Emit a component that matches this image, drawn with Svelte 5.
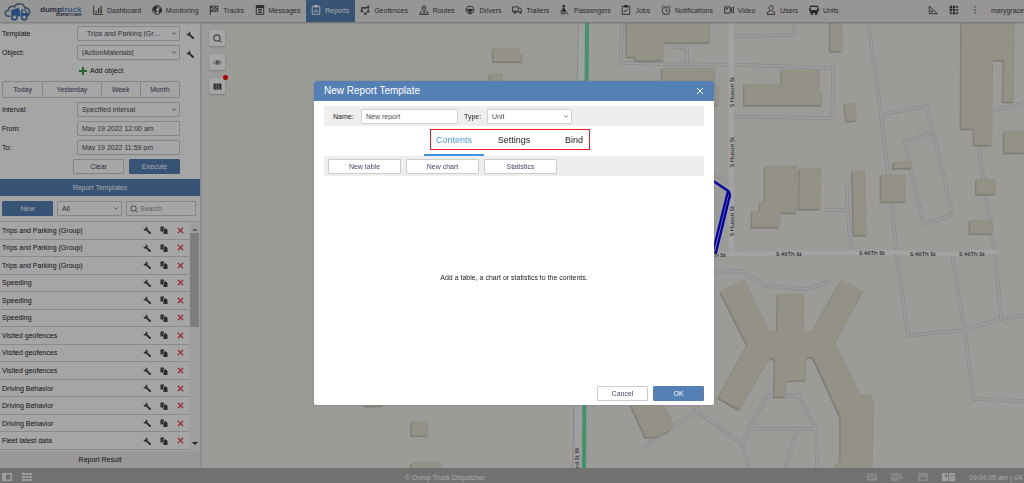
<script>
  const navItems = [
    { label: 'Dashboard', line: 'M1 1V15H16', solid: 'M4 9h2v4H4zM8 5h2v8H8zM12 2h2v11h-2z' },
    { label: 'Monitoring', line: 'M8 1a7 7 0 1 0 .01 0z', solid: 'M2 4l5-3 3 2-2 3-2 1 2 3-2 4-2-4-3-3zM11 3l4 3v5l-3 2-2-4 2-2z' },
    { label: 'Tracks', line: 'M2 1v15M2 2h12v8H2', solid: 'M3 3h3v2H3zM9 3h2v2H9zM6 5h3v2H6zM11 5h3v2h-3zM3 7h3v2H3zM9 7h2v2H9z' },
    { label: 'Messages', line: 'M2 1h12v14H2zM5 7h6M5 9.500h6M5 12h6', solid: 'M2 1h12v4H2z' },
    { label: 'Reports', line: 'M2 2h12v13H2zM5 12V8M8 12V6M11 12V9', solid: 'M5 0h6v4H5z' },
    { label: 'Geofences', line: 'M3 4l5 1 5-2 0 7-5 4-5-5z', solid: 'M2 3h3v3H2zM12 1h3v3h-3zM12 9h3v3h-3zM7 13h3v3H7zM1 8h3v3H1zM7 3h3v3H7z' },
    { label: 'Routes', line: 'M8 10C5 7 4 5 5 3s5-2 6 0-1 4-3 7zM4 9L1 15h14l-3-6M5 13l6-1', solid: 'M7 3h2v3H7z' },
    { label: 'Drivers', line: 'M8 2c4 0 7 3 6 7s-4 5-6 5-5-1-6-5 2-7 6-7zM2 7h12M4 9l3 1v4M12 9l-3 1v4', solid: 'M5 7h6v3H5z' },
    { label: 'Trailers', line: 'M1 3h9v7H1zM11 5h3l1 3v3M1 11h14', solid: 'M3 11h3v3H3zM12 11h3v3h-3z' },
    { label: 'Passengers', line: 'M5 5v6h5l3 4M5 7l5 2M2 8v6h7', solid: 'M4 0h4v4H4zM4 5h4v6H4z' },
    { label: 'Jobs', line: 'M2 2h12v13H2zM5 8l2 3 4-5', solid: 'M5 0h6v4H5z' },
    { label: 'Notifications', line: 'M8 3a6 6 0 1 0 .01 0zM8 5v4l3 1M1 4l3-3M15 4l-3-3M4 14l-2 2M12 14l2 2', solid: '' },
    { label: 'Video', line: 'M1 3h9v10H1zM12 6l3-3v10l-3-3z', solid: 'M3 5h3v2H3z' },
    { label: 'Users', line: 'M8 1c5 0 3 6 1 8l5 3v3H2v-3l5-3C4 6 4 1 8 1z', solid: '' },
    { label: 'Units', line: 'M2 2h12v10H2z', solid: 'M0 5h2v4H0zM14 5h2v4h-2zM2 8h12v5H2zM3 12h3v4H3zM10 12h3v4h-3zM2 1h12v2H2z' }
  ];

  const templates = [
    'Trips and Parking (Group)',
    'Trips and Parking (Group)',
    'Trips and Parking (Group)',
    'Speeding',
    'Speeding',
    'Speeding',
    'Visited geofences',
    'Visited geofences',
    'Visited geofences',
    'Driving Behavior',
    'Driving Behavior',
    'Driving Behavior',
    'Fleet latest data'
  ];

  const tabs = ['Contents', 'Settings', 'Bind'];
  let activeTab = $state('Contents');
  let reportName = $state('New report');
  let from = $state('May 19 2022 12:00 am');
  let to = $state('May 19 2022 11:59 pm');

  // map geometry, three units per pixel
  const roads = [
    'M103 48L281 45V5',
    'M-233 5L-238 128L-130 132L103 134L399 144L397 294L103 290',
    'M-39 130V85L-88 78',
    'M504 5L543 285L575 545L592 720L624 947L790 930L904 897L972 885',
    'M543 283L680 258L758 584L670 614L614 365L692 340',
    'M836 378L860 550L885 700L904 897',
    'M878 272L972 250',
    'M441 502L443 570L453 690M372 569H441',
    'M40 460L90 490',
    'M757 708L793 930L822 1137L972 1143',
    'M42 757L125 753L198 798L320 808L388 786',
    'M-170 1285L-10 1172V1150M-10 1172L125 1272L146 1344',
    'M125 1272L200 1127H297L346 1227L352 1344M150 1227H346M290 1230L256 1344'
  ];

  const buildings = [
    '-220,5 30,5 30,67 -110,67 -110,121 -195,121 -195,110 -220,110',
    '-113,145 44,145 44,195 56,195 56,255 -113,255',
    '391,5 425,5 425,93 391,93',
    '245,151 358,151 358,222 366,222 366,255 133,255 133,193 245,193',
    '434,252 465,248 469,300 440,304',
    '785,5 943,5 940,245 909,245 912,120 878,120 875,375 822,375 822,326 783,326',
    '912,334 972,334 972,398 912,398',
    '195,438 291,438 289,578 242,578 238,621 156,621 156,574 180,574 180,548 195,548',
    '299,445 362,445 360,567 297,567',
    '457,454 494,454 499,645 462,645',
    '580,426 634,426 634,444 580,444',
    '543,466 616,466 616,544 543,544',
    '829,479 886,479 886,522 829,522',
    '810,601 877,601 877,640 810,640',
    '62,815 132,778 208,935 232,935 234,823 312,823 310,935 336,935 424,780 488,815 405,968 480,1123 512,1125 521,1146 516,1350 407,1350 412,1330 422,1324 422,1190 340,1012 317,1012 317,1080 258,1082 256,1130 223,1130 225,1020 210,1012 119,1168 54,1132 142,975',
    '-207,1155 -110,1155 -80,1210 -90,1230 -130,1250 -162,1252',
    '-865,1205 -817,1205 -817,1246 -865,1246',
    '-865,1328 -778,1328 -778,1350 -865,1350',
    '-1005,1140 -950,1140 -950,1157 -1005,1157',
    '-620,85 -544,85 -544,102 -533,102 -533,124 -620,124',
    '-630,163 -595,163 -595,195 -630,195'
  ];
</script>

{#snippet chevron()}
  <svg class="chevron" viewBox="0 0 8 6" aria-hidden="true"><path d="M1.500 1.500L4 4L6.500 1.500" /></svg>
{/snippet}

{#snippet wrench()}
  <svg class="glyph" viewBox="0 0 16 16" aria-hidden="true">
    <path d="M5 1l1 3-2 2-3-1c0 3 2 5 5 4l7 7c2 0 3-1 3-3L9 7c1-3-1-6-4-6z" />
  </svg>
{/snippet}

{#snippet magnifier()}
  <svg class="magnifier" viewBox="0 0 16 16" aria-hidden="true">
    <circle cx="7" cy="7" r="5.500" /><path d="M11 11l4 4" />
  </svg>
{/snippet}

<div class="app">
  <header>
    <a class="logo" href="#home" aria-label="Dump Truck Dispatcher">
      <svg viewBox="0 0 52 36" aria-hidden="true">
        <path class="cloud" d="M12 27H9C1 27 0 17 8 16C8 9 15 6 20 9C24 1 38 1 40 11C50 10 53 24 43 27" />
        <path class="truck" d="M13 16l15-5 3 7v9H15zM33 14h8l5 7v7H32z" />
        <path class="cab" d="M36 16h4l3 5h-7z" />
        <circle cx="20" cy="29" r="5" /><circle cx="39" cy="29" r="5" />
      </svg>
      <span class="brand">
        <span class="name">dump<b>truck</b></span>
        <span class="sub">DISPATCHER</span>
      </span>
    </a>
    <nav>
      {#each navItems as item}
        <a href="#{item.label}" class:active={item.label === 'Reports'}>
          <svg viewBox="0 0 16 16" aria-hidden="true">
            <path class="line" d={item.line} />
            <path class="solid" d={item.solid} />
          </svg>
          {item.label}
        </a>
      {/each}
    </nav>
    <div class="tools">
      <button aria-label="Ruler">
        <svg viewBox="0 0 16 16"><path class="line" d="M2 2v12h13zM5 9v2h3z" /></svg>
      </button>
      <button aria-label="Apps">
        <svg viewBox="0 0 16 16">
          <path class="solid" d="M1 1h4v4H1zM6 1h4v4H6zM1 6h4v4H1zM6 6h4v4H6zM6 11h4v4H6z" />
          <path class="line" d="M12 2h2v2h-2zM12 7h2v2h-2zM2 12h2v2H2zM12 12h2v2h-2z" />
        </svg>
      </button>
      <button aria-label="More">
        <svg viewBox="0 0 16 16"><path class="solid" d="M7 2h2v2H7zM7 7h2v2H7zM7 12h2v2H7z" /></svg>
      </button>
      <span class="user">marygrace</span>
    </div>
  </header>

  <main>
    <aside>
      <form class="query" onsubmit={(e) => e.preventDefault()}>
        <div class="field">
          <label for="template">Template</label>
          <span class="select indent">
            <select id="template"><option>Trips and Parking (Gr…</option></select>
            {@render chevron()}
          </span>
          <button class="icon" type="button" aria-label="Edit template">{@render wrench()}</button>
        </div>
        <div class="field">
          <label for="object">Object:</label>
          <span class="select">
            <select id="object"><option>[ActionMaterials]</option></select>
            {@render chevron()}
          </span>
          <button class="icon" type="button" aria-label="Edit object">{@render wrench()}</button>
        </div>
        <button class="add" type="button">
          <svg viewBox="0 0 8 8" aria-hidden="true"><path d="M4 0V8M0 4H8" /></svg>
          Add object
        </button>
        <div class="days">
          <button type="button">Today</button>
          <button type="button">Yesterday</button>
          <button type="button">Week</button>
          <button type="button">Month</button>
        </div>
        <div class="field">
          <label for="interval">Interval:</label>
          <span class="select">
            <select id="interval"><option>Specified interval</option></select>
            {@render chevron()}
          </span>
        </div>
        <div class="field">
          <label for="from">From:</label>
          <input id="from" bind:value={from} />
        </div>
        <div class="field">
          <label for="to">To:</label>
          <input id="to" bind:value={to} />
        </div>
        <div class="actions">
          <button class="btn" type="button">Clear</button>
          <button class="btn primary" type="submit">Execute</button>
        </div>
      </form>

      <h2>Report Templates</h2>
      <div class="filter">
        <button class="btn primary">New</button>
        <span class="select">
          <select aria-label="Filter"><option>All</option></select>
          {@render chevron()}
        </span>
        <label class="search">
          {@render magnifier()}
          <input type="search" placeholder="Search" aria-label="Search" />
        </label>
      </div>

      <div class="list">
        <ul>
          {#each templates as name}
            <li>
              <span>{name}</span>
              <button class="icon" aria-label="Edit">{@render wrench()}</button>
              <button class="icon" aria-label="Copy">
                <svg class="glyph" viewBox="0 0 16 16"><path d="M1 1h7v3H6v7H1zM7 5h5l3 3v8H7z" /></svg>
              </button>
              <button class="icon" aria-label="Delete">
                <svg class="cross" viewBox="0 0 16 16"><path d="M2 2L14 14M14 2L2 14" /></svg>
              </button>
            </li>
          {/each}
        </ul>
        <div class="scroll" aria-hidden="true">
          <svg viewBox="0 0 8 8"><path class="dim" d="M1 6L4 3L7 6z" /></svg>
          <i></i>
          <svg viewBox="0 0 8 8"><path d="M1 2L4 5L7 2z" /></svg>
        </div>
      </div>
      <h3>Report Result</h3>
    </aside>

    <section class="map" aria-label="Map">
      <svg viewBox="202 22 822 446" preserveAspectRatio="xMinYMin slice">
        <path class="avenue" d="M583 22L579 468" />
        <path class="edge" d="M578 22L573 468" />
        <g transform="translate(700 20) scale(.33333)">
          {#each roads as d}<path class="casing" {d} />{/each}
          {#each roads as d}<path class="road" {d} />{/each}
          <path class="street" d="M94 5V700" />
          <path class="street cross-st" d="M40 702L590 697L757 703L888 695" />
          {#each buildings as points}
            <polygon class="shade" {points} transform="translate(-3 4)" />
            <polygon class="building" {points} />
          {/each}
          <path class="track" d="M30 476L86 514L90 525L48 697H30M84 514L40 690" />
        </g>
        <path class="green" d="M587 22L584 468" />
        <text transform="translate(734 107) rotate(-90)">S Huson St</text>
        <text transform="translate(734 167) rotate(-90)">S Huson St</text>
        <text transform="translate(734 236) rotate(-90)">S Huson St</text>
        <text transform="translate(579 468) rotate(-90)">rd St W</text>
        <text x="776" y="256">S 46Th St</text>
        <text x="700" y="257">S 46Th St</text>
        <text x="859" y="255">S 46Th St</text>
        <text x="910" y="256">S 46Th St</text>
        <text x="959" y="256">S 46Th St</text>
      </svg>
      <div class="layers">
        <button aria-label="Find">{@render magnifier()}</button>
        <button aria-label="Visibility">
          <svg viewBox="0 0 16 16"><path class="line" d="M1 8Q8 1 15 8Q8 15 1 8z" /><circle cx="8" cy="8" r="3" /></svg>
        </button>
        <button aria-label="Map layers">
          <svg viewBox="0 0 16 16"><path d="M1 2l4 1v11l-4-1zM6 3l4-1v11l-4 1zM11 2l4 1v11l-4-1z" /></svg>
          <span class="dot"></span>
        </button>
      </div>
    </section>
  </main>

  <footer>
    <div class="left">
      <svg viewBox="0 0 20 16"><path d="M0 0H20V16H0zM8 3V13H17V3z" fill-rule="evenodd" /></svg>
      <svg viewBox="0 0 20 16"><path d="M0 0h6v4H0zM7 0h6v4H7zM14 0h6v4h-6zM0 6h6v4H0zM7 6h6v4H7zM14 6h6v4h-6zM0 12h6v4H0zM7 12h6v4H7zM14 12h6v4h-6z" /></svg>
    </div>
    <span>© Dump Truck Dispatcher</span>
    <div class="right">
      <svg class="off" viewBox="0 0 22 16"><path d="M0 0H22V3H0zM0 4H22V16H0zM5 7V9H17V7zM5 11V12H12V11z" fill-rule="evenodd" /></svg>
      <svg class="off wide" viewBox="0 0 26 16"><path d="M0 0H21L10 8zM0 2L10 10L21 2V5L26 9L20 14V11H15V16H0z" /></svg>
      <svg class="off" viewBox="0 0 20 16"><path d="M0 0H20V16H0zM3 13H17L12 6L8 10L6 8z" fill-rule="evenodd" /></svg>
      <svg class="wide" viewBox="0 0 26 16"><path d="M0 0H12V16H0zM14 0H26V16H14zM6 3V8H10V3zM16 4V6H23V4zM16 8V9H23V8z" fill-rule="evenodd" /></svg>
      <time>09:04:05 am (-04</time>
    </div>
  </footer>

  <div class="backdrop">
    <div class="dialog" role="dialog" aria-labelledby="dialog-title">
      <div class="title">
        <h1 id="dialog-title">New Report Template</h1>
        <button aria-label="Close">
          <svg viewBox="0 0 8 8"><path d="M1 1L7 7M7 1L1 7" /></svg>
        </button>
      </div>
      <div class="strip">
        <label for="report-name">Name:</label>
        <input id="report-name" bind:value={reportName} />
        <label for="report-type">Type:</label>
        <span class="select">
          <select id="report-type"><option>Unit</option></select>
          {@render chevron()}
        </span>
      </div>
      <div class="tabs" role="tablist">
        {#each tabs as tab}
          <button role="tab" aria-selected={activeTab === tab} class:current={activeTab === tab} onclick={() => (activeTab = tab)}>
            {tab}
          </button>
        {/each}
      </div>
      <div class="strip adders">
        <button class="btn">New table</button>
        <button class="btn">New chart</button>
        <button class="btn">Statistics</button>
      </div>
      <p>Add a table, a chart or statistics to the contents.</p>
      <div class="buttons">
        <button class="btn">Cancel</button>
        <button class="btn primary">OK</button>
      </div>
    </div>
  </div>
</div>

<style>
  :global(body) {
    margin: 0;
  }

  .app {
    display: flex;
    flex-direction: column;
    height: 100vh;
    overflow: hidden;
    font-family: 'Liberation Sans', Arial, sans-serif;
    font-size: 7px;
    color: #222;
    background: #fff;
  }

  .app * {
    box-sizing: border-box;
  }

  svg {
    display: block;
    flex: none;
  }

  button,
  input,
  select {
    margin: 0;
    font: inherit;
    color: inherit;
  }

  button {
    padding: 0;
    border: 0;
    background: none;
  }

  a {
    color: inherit;
    text-decoration: none;
  }

  h1, h2, h3, p, ul {
    margin: 0;
    padding: 0;
    font-weight: normal;
  }

  /* top bar */
  header {
    position: relative;
    z-index: 1;
    display: flex;
    flex: none;
    height: 22px;
    background: #e7e7e7;
    color: #444;
    box-shadow: 0 1px 2px #aaa;
  }

  .logo {
    display: flex;
    align-items: center;
    gap: 9px;
    flex: 0 0 88px;
    padding-left: 4px;
  }

  .logo svg {
    width: 27px;
    height: 19px;
  }

  .cloud { fill: none; stroke: #5c7396; stroke-width: 3; }
  .truck { fill: #3d72b8; }
  .cab { fill: #e7e7e7; }
  .logo circle { fill: #e7e7e7; stroke: #3d72b8; stroke-width: 3; }

  .brand {
    display: flex;
    flex-direction: column;
    align-items: flex-end;
  }

  .name {
    font-size: 8px;
    line-height: 7px;
    font-weight: bold;
    color: #3f4c5e;
  }

  .name b { color: #5a86bf; }

  .sub {
    font-size: 4px;
    line-height: 4px;
    font-weight: bold;
    color: #33445e;
  }

  nav {
    display: flex;
    justify-content: space-between;
    flex: 0 1 756px;
  }

  nav a {
    display: flex;
    align-items: center;
    gap: 4px;
    padding: 0 5px 2px;
    white-space: nowrap;
  }

  nav a.active {
    color: #fff;
    background: #5580b5;
  }

  header nav svg,
  .tools svg {
    width: 10px;
    height: 10px;
  }

  .line { fill: none; stroke: currentColor; stroke-width: 1.500; }
  .solid { fill: currentColor; }

  .tools {
    display: flex;
    align-items: center;
    gap: 11px;
    flex: 0 0 95px;
    margin-left: auto;
    padding-bottom: 2px;
    white-space: nowrap;
  }

  /* left panel */
  main {
    display: flex;
    flex: 1;
    min-height: 0;
  }

  aside {
    display: flex;
    flex-direction: column;
    flex: 0 0 202px;
    border-right: 2px solid #d8d8d8;
    background: #fdfdfd;
  }

  .query {
    display: flex;
    flex-direction: column;
    gap: 4px;
    padding: 4px 0 5px 2px;
  }

  .field {
    display: flex;
    align-items: center;
    height: 15px;
  }

  .field label {
    flex: 0 0 75px;
  }

  .field .select,
  .field input {
    flex: 0 0 103px;
    width: 103px;
  }

  .select {
    position: relative;
    display: flex;
  }

  input,
  select {
    width: 100%;
    height: 15px;
    padding: 0 4px;
    border: 1px solid #ccc;
    border-radius: 1px;
    outline: 0;
    appearance: none;
    background: #fff;
    color: #4c4c55;
  }

  .indent select {
    padding-left: 9px;
  }

  .chevron {
    position: absolute;
    right: 3px;
    top: 5px;
    width: 6px;
    height: 5px;
    fill: none;
    stroke: #555;
    pointer-events: none;
  }

  .glyph {
    width: 8px;
    height: 8px;
    fill: #444;
  }

  .field .icon {
    margin-left: 6px;
    padding-top: 2px;
  }

  .add {
    display: flex;
    align-items: center;
    align-self: flex-start;
    gap: 3px;
    height: 13px;
    margin-left: 77px;
    color: #222;
  }

  .add svg {
    width: 8px;
    height: 8px;
    stroke: #2f9e3b;
    stroke-width: 2;
  }

  .days {
    display: flex;
    width: 178px;
    height: 17px;
    border: 1px solid #ccc;
    border-radius: 2px;
    color: #4a4a6a;
  }

  .days button {
    flex: 1 1 39px;
  }

  .days button:nth-child(2) {
    flex-basis: 58px;
  }

  .days button + button {
    border-left: 1px solid #ccc;
  }

  .actions {
    display: flex;
    gap: 5px;
    margin-left: 71px;
  }

  .btn {
    width: 51px;
    height: 15px;
    border: 1px solid #ccc;
    border-radius: 1px;
    background: #fff;
    color: #45456f;
  }

  .btn.primary {
    border-color: #5580b5;
    background: #5580b5;
    color: #fff;
  }

  h2 {
    flex: none;
    font-size: 7px;
    line-height: 17px;
    text-align: center;
    color: #fff;
    background: #5580b5;
  }

  .filter {
    display: flex;
    gap: 4px;
    flex: none;
    padding: 5px 4px 5px 2px;
  }

  .filter .select {
    flex: 0 0 65px;
  }

  .search {
    display: flex;
    align-items: center;
    flex: 1;
    height: 15px;
    padding-left: 3px;
    border: 1px solid #ccc;
  }

  .search input {
    min-width: 0;
    height: 13px;
    padding: 0 2px;
    border: 0;
  }

  .search input::placeholder {
    color: #999;
  }

  .magnifier {
    width: 8px;
    height: 8px;
    fill: none;
    stroke: #666;
    stroke-width: 2;
  }

  .list {
    display: flex;
    flex: 1;
    min-height: 0;
    border-top: 1px solid #d4d4d4;
  }

  .list ul {
    display: flex;
    flex-direction: column;
    flex: 1;
    padding-bottom: 1px;
    list-style: none;
  }

  .list li {
    display: flex;
    align-items: center;
    flex: 1;
    gap: 9px;
    padding: 0 5px 0 2px;
    border-bottom: 1px solid #d4d4d4;
  }

  .list li span {
    flex: 1;
  }

  .cross {
    width: 7px;
    height: 7px;
    stroke: #e8353d;
    stroke-width: 3;
  }

  .scroll {
    display: flex;
    flex-direction: column;
    align-items: center;
    flex: 0 0 11px;
    padding: 3px 1px;
    background: #f4f4f4;
  }

  .scroll svg {
    width: 8px;
    height: 8px;
    fill: #333;
  }

  .scroll .dim { fill: #999; }

  .scroll i {
    width: 9px;
    height: 42%;
    margin-bottom: auto;
    background: #c1c1c1;
  }

  h3 {
    flex: none;
    font-size: 7px;
    line-height: 17px;
    text-align: center;
    background: #eaeaea;
  }

  /* map */
  .map {
    position: relative;
    flex: 1;
    min-width: 0;
    overflow: hidden;
    background: #eeeeea;
  }

  .map > svg {
    width: 100%;
    height: 100%;
  }

  .map path { fill: none; }
  .casing { stroke: #d6d6de; stroke-width: 11; }
  .road { stroke: #eeeeef; stroke-width: 6; }
  .street { stroke: #fbfbfb; stroke-width: 16; }
  .cross-st { stroke-width: 13; stroke-linecap: round; }
  .avenue { stroke: #f4f4f4; stroke-width: 9; }
  .edge { stroke: #cfcfe0; }
  .green { stroke: #66e0a4; stroke-width: 4; }
  .track { stroke: #00f; stroke-width: 7; }
  .shade { fill: #c0beb4; stroke: #c0beb4; stroke-width: 2; }
  .building { fill: #e4dfd0; stroke: #d9d3c0; stroke-width: 2; }

  .map text {
    font-family: 'Noto Sans', sans-serif;
    font-size: 6px;
    fill: #222;
  }

  .layers {
    position: absolute;
    top: 8px;
    left: 7px;
    display: flex;
    flex-direction: column;
    gap: 8px;
  }

  .layers button {
    position: relative;
    display: flex;
    align-items: center;
    justify-content: center;
    width: 16px;
    height: 16px;
    border-radius: 2px;
    background: #fff;
    box-shadow: 0 1px 2px #bbb;
    color: #777;
  }

  .layers svg {
    width: 9px;
    height: 9px;
  }

  .layers circle { fill: #777; }
  .layers .magnifier circle { fill: none; }
  .layers button:last-child path { fill: #444; }

  .dot {
    position: absolute;
    top: -3px;
    right: -3px;
    width: 5px;
    height: 5px;
    border-radius: 50%;
    background: #f00;
  }

  /* status bar */
  footer {
    display: flex;
    align-items: center;
    flex: none;
    height: 15px;
    padding-top: 3px;
    background: #aeaeae;
    color: #fff;
    white-space: nowrap;
  }

  footer svg {
    width: 10px;
    height: 8px;
    fill: #f4f4f4;
  }

  footer .wide { width: 13px; }
  footer .off { fill: #d0d0d0; }

  .left {
    display: flex;
    gap: 10px;
    flex: 0 0 405px;
    padding-left: 2px;
  }

  .right {
    display: flex;
    align-items: center;
    gap: 14px;
    flex: 0 0 157px;
    margin-left: auto;
  }

  /* dialog */
  .backdrop {
    position: fixed;
    inset: 0;
    z-index: 2;
    display: flex;
    align-items: center;
    justify-content: center;
    padding: 3px 0 0 4px;
    background: rgba(0, 0, 0, 0.35);
  }

  .dialog {
    display: flex;
    flex-direction: column;
    width: 400px;
    min-height: 324px;
    border-radius: 2px;
    background: #fff;
    box-shadow: 0 0 2px #777;
  }

  .title {
    display: flex;
    align-items: center;
    justify-content: space-between;
    height: 20px;
    margin-bottom: 5px;
    padding: 0 10px;
    border-radius: 2px 2px 0 0;
    background: #5580b5;
    color: #fff;
  }

  h1 {
    font-size: 10px;
    line-height: 20px;
  }

  .title svg {
    width: 8px;
    height: 8px;
    stroke: #fff;
  }

  .strip {
    display: flex;
    align-items: center;
    height: 20px;
    margin: 0 10px;
    padding-left: 9px;
    background: #eee;
  }

  .strip label {
    flex: none;
    width: 28px;
  }

  .strip label + input {
    width: 97px;
    margin-right: 6px;
  }

  .strip input + label {
    width: 23px;
  }

  .strip .select {
    width: 85px;
  }

  .strip input,
  .strip select {
    border-color: #d0d0d0;
  }

  .tabs {
    position: relative;
    display: flex;
    align-self: center;
    height: 30px;
  }

  /* highlight frame around the three tabs */
  .tabs::after {
    content: '';
    position: absolute;
    inset: 3px 14px 6px 6px;
    border: 1px solid #ed1c24;
    pointer-events: none;
  }

  .tabs button {
    width: 60px;
    border-bottom: 2px solid transparent;
    font-size: 9px;
  }

  .tabs .current {
    border-color: #3f94ea;
    color: #4c9bf0;
  }

  .adders {
    gap: 5px;
    padding-left: 4px;
  }

  .adders .btn {
    width: 73px;
  }

  .dialog p {
    flex: 1;
    display: flex;
    align-items: center;
    justify-content: center;
    padding-bottom: 4px;
  }

  .buttons {
    display: flex;
    justify-content: flex-end;
    gap: 5px;
    padding: 4px 10px;
  }
</style>
